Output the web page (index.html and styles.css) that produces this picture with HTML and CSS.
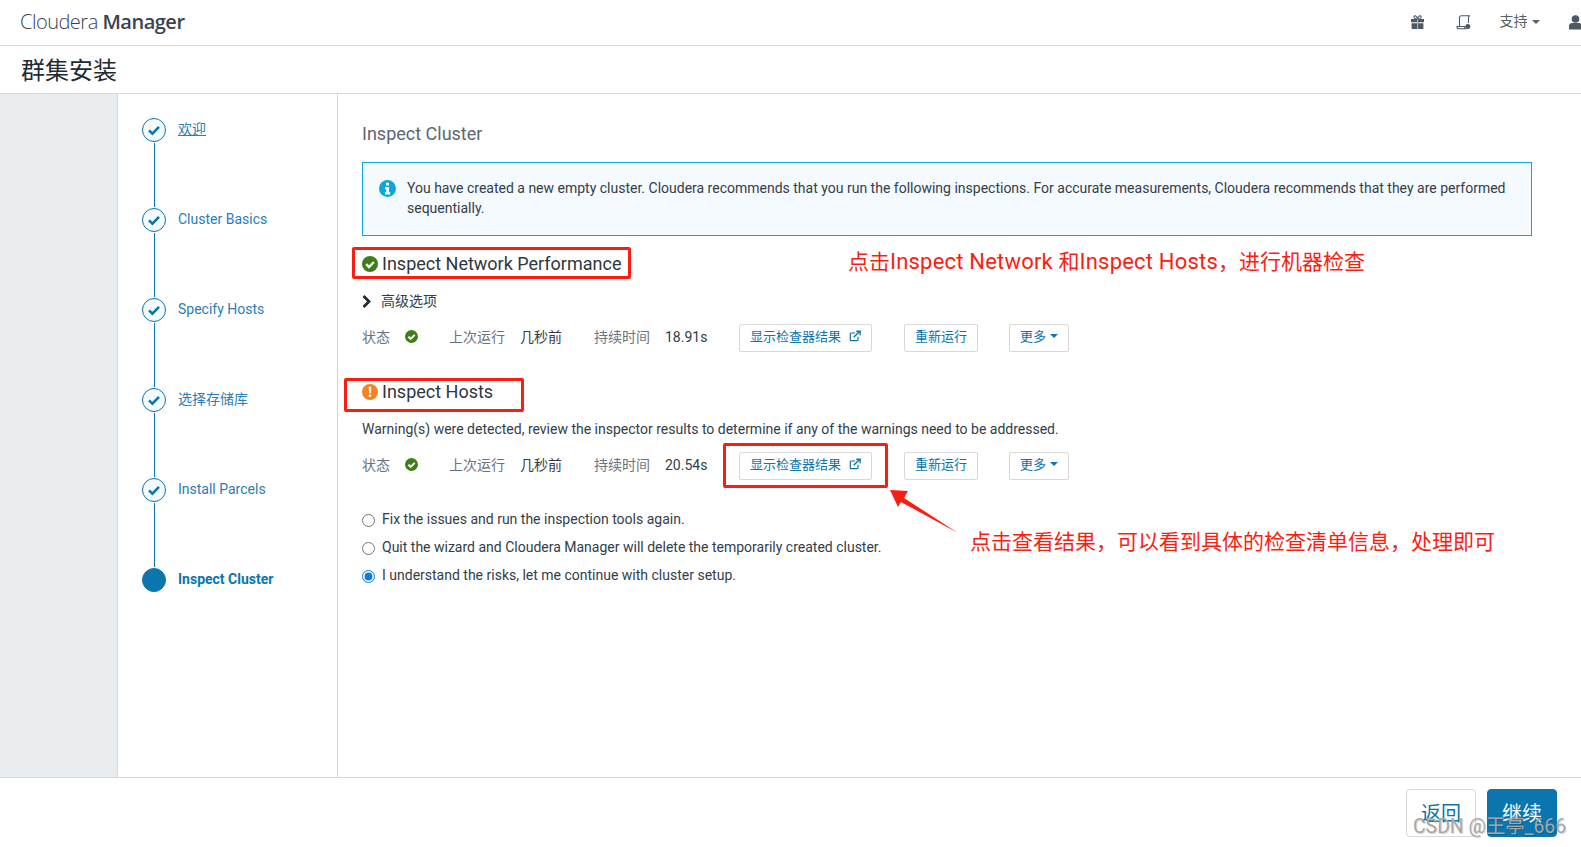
FILE: index.html
```html
<!DOCTYPE html>
<html lang="en">
<head>
    <meta charset="UTF-8">
    <title>群集安装 - Cloudera Manager</title>
    <link rel="stylesheet" href="styles.css">
</head>
<body>
    <svg class="icon-defs" width="0" height="0">
        <symbol id="i-ok" viewBox="0 0 16 16">
            <circle cx="8" cy="8" r="8" fill="#3f7d1c"/>
            <path d="M4.200 8.200 7 11l4.900-5" fill="none" stroke="#fff" stroke-width="2.400"/>
        </symbol>
        <symbol id="i-check" viewBox="0 0 14 14">
            <path d="M2 7.400 5.400 10.600 12 3.800" fill="none" stroke="#0b75ad" stroke-width="2.600"/>
        </symbol>
        <symbol id="i-link" viewBox="0 0 14 14">
            <path d="M10.500 8v3.500a1 1 0 0 1-1 1h-7a1 1 0 0 1-1-1v-7a1 1 0 0 1 1-1H7" fill="none" stroke="#0b75ad" stroke-width="1.400"/>
            <path d="M5.500 8.500 12 2M8.500 1.500h4.500v4.500" fill="none" stroke="#0b75ad" stroke-width="1.600"/>
        </symbol>
    </svg>

    <!-- Top bar -->
    <div class="topbar">
        <div class="logo">Cloudera <strong>Manager</strong></div>
        <div class="top-links">
            <svg class="top-icon top-gift" width="15" height="15" viewBox="0 0 15 15">
                <path d="M1 4h13v3.200H1zM1.600 8.200h11.800V14H1.600z" fill="#4d5964"/>
                <path d="M7.500 4C5.500 4 3.500 3.200 4 1.500 4.600 0 6.800.8 7.500 4c.7-3.200 2.900-4 3.500-2.500C11.500 3.200 9.500 4 7.500 4z" fill="none" stroke="#4d5964" stroke-width="1.100"/>
                <path d="M7 4h1.100v10H7z" fill="#c9a77f"/>
            </svg>
            <svg class="top-icon top-doc" width="16" height="15" viewBox="0 0 16 15">
                <path d="M3.500 11V2.500C3.500 1.400 4.400.8 5.500.8h8.500c-1 0-1.500.7-1.500 1.700V8M1 11.500h7.500c0 1 .3 1.800 1 2.300H2.500C1.500 13.800 1 12.800 1 11.500z" fill="none" stroke="#4d5964" stroke-width="1.100"/>
                <circle cx="11.800" cy="11.500" r="2.500" fill="#4d5964"/>
            </svg>
            <span class="top-menu">支持 <i class="caret"></i></span>
            <svg class="top-icon" width="13" height="15" viewBox="0 0 13 15">
                <circle cx="6.500" cy="4" r="3.800" fill="#4d5964"/>
                <path d="M0 14.500V11c0-2 1.500-3 3-3h7c1.500 0 3 1 3 3v3.500z" fill="#4d5964"/>
            </svg>
        </div>
    </div>

    <div class="titlebar">群集安装</div>

    <div class="content">
        <div class="gutter"></div>

        <!-- Wizard steps -->
        <div class="steps">
            <div class="step">
                <div class="step-track"><span class="step-dot"><svg width="14" height="14"><use href="#i-check"/></svg></span><span class="step-line"></span></div>
                <a class="step-name step-hover">欢迎</a>
            </div>
            <div class="step">
                <div class="step-track"><span class="step-dot"><svg width="14" height="14"><use href="#i-check"/></svg></span><span class="step-line"></span></div>
                <a class="step-name">Cluster Basics</a>
            </div>
            <div class="step">
                <div class="step-track"><span class="step-dot"><svg width="14" height="14"><use href="#i-check"/></svg></span><span class="step-line"></span></div>
                <a class="step-name">Specify Hosts</a>
            </div>
            <div class="step">
                <div class="step-track"><span class="step-dot"><svg width="14" height="14"><use href="#i-check"/></svg></span><span class="step-line"></span></div>
                <a class="step-name">选择存储库</a>
            </div>
            <div class="step">
                <div class="step-track"><span class="step-dot"><svg width="14" height="14"><use href="#i-check"/></svg></span><span class="step-line"></span></div>
                <a class="step-name">Install Parcels</a>
            </div>
            <div class="step">
                <div class="step-track"><span class="step-dot step-current"></span></div>
                <a class="step-name step-active">Inspect Cluster</a>
            </div>
        </div>

        <!-- Main panel -->
        <div class="main">
            <h2 class="page-heading">Inspect Cluster</h2>

            <div class="alert">
                <svg class="alert-icon" width="17" height="17" viewBox="0 0 17 17">
                    <circle cx="8.500" cy="8.500" r="8.500" fill="#0ea5e0"/>
                    <path d="M7 2.800h3v2.600H7zM6 7h4v5.300h1.200V14.500H6v-2.200h1.200V9.200H6z" fill="#fff"/>
                </svg>
                <p>You have created a new empty cluster. Cloudera recommends that you run the following inspections. For accurate measurements, Cloudera recommends that they are performed sequentially.</p>
            </div>

            <h3 class="section-title section-network">
                <svg width="16" height="16"><use href="#i-ok"/></svg>
                Inspect Network Performance
            </h3>
            <div class="advanced">
                <svg width="9" height="13" viewBox="0 0 9 13"><path d="M1.500 1 7 6.500 1.500 12" fill="none" stroke="#222b33" stroke-width="2.800"/></svg>
                高级选项
            </div>
            <div class="status-row">
                <span class="label">状态</span>
                <svg class="status-icon" width="13" height="13"><use href="#i-ok"/></svg>
                <span class="label">上次运行</span>
                <span class="value">几秒前</span>
                <span class="label">持续时间</span>
                <span class="duration">18.91s</span>
                <div><a class="btn">显示检查器结果 <svg class="btn-link" width="12" height="12"><use href="#i-link"/></svg></a></div>
                <div><a class="btn">重新运行</a></div>
                <div><a class="btn">更多 <i class="caret caret-blue"></i></a></div>
            </div>

            <h3 class="section-title section-hosts">
                <svg width="16" height="16" viewBox="0 0 16 16">
                    <circle cx="8" cy="8" r="8" fill="#f5841f"/>
                    <path d="M6.700 2.800h2.600l-.4 6.400H7.100zM6.800 10.400h2.400v2.500H6.800z" fill="#fff"/>
                </svg>
                Inspect Hosts
            </h3>
            <p class="warning">Warning(s) were detected, review the inspector results to determine if any of the warnings need to be addressed.</p>
            <div class="status-row">
                <span class="label">状态</span>
                <svg class="status-icon" width="13" height="13"><use href="#i-ok"/></svg>
                <span class="label">上次运行</span>
                <span class="value">几秒前</span>
                <span class="label">持续时间</span>
                <span class="duration">20.54s</span>
                <div><a class="btn">显示检查器结果 <svg class="btn-link" width="12" height="12"><use href="#i-link"/></svg></a></div>
                <div><a class="btn">重新运行</a></div>
                <div><a class="btn">更多 <i class="caret caret-blue"></i></a></div>
            </div>

            <div class="choices">
                <label class="choice"><input type="radio" name="next"> Fix the issues and run the inspection tools again.</label>
                <label class="choice"><input type="radio" name="next"> Quit the wizard and Cloudera Manager will delete the temporarily created cluster.</label>
                <label class="choice"><input type="radio" name="next" checked> I understand the risks, let me continue with cluster setup.</label>
            </div>
        </div>
    </div>

    <!-- Footer -->
    <div class="footer">
        <a class="footer-btn">返回</a>
        <a class="footer-btn footer-primary">继续</a>
    </div>

    <!-- Annotations drawn over the screenshot -->
    <div class="mark mark-network"></div>
    <div class="mark mark-hosts"></div>
    <div class="mark mark-result"></div>
    <svg class="mark-arrow" width="72" height="48" viewBox="0 0 72 48">
        <path d="M1 1 19 2 15 9 69 44 12 13 9 18z" fill="#fa1e12"/>
    </svg>
    <div class="note note-top">点击<span class="note-latin">Inspect Network </span>和<span class="note-latin">Inspect Hosts</span>，进行机器检查</div>
    <div class="note note-bottom">点击查看结果，可以看到具体的检查清单信息，处理即可</div>
    <div class="watermark">CSDN @王亭_666</div>
</body>
</html>
```

FILE: styles.css
```css
* {
    margin: 0;
    padding: 0;
    box-sizing: border-box;
}

body {
    font-family: Roboto, "Noto Sans CJK SC", sans-serif;
    font-size: 14px;
    color: #333d47;
    background-color: #fff;
    display: flex;
    flex-direction: column;
    height: 100vh;
    overflow: hidden;
    position: relative;
}

.icon-defs {
    position: absolute;
}

/* Top bar */
.topbar {
    height: 46px;
    flex: none;
    display: flex;
    justify-content: space-between;
    align-items: center;
    padding-left: 20px;
    border-bottom: 1px solid #d8d8d8;
    overflow: hidden;
}

.logo {
    font-family: "Open Sans", sans-serif;
    font-size: 20px;
    font-weight: 300;
    letter-spacing: -0.5px;
    color: #39444e;
    margin-bottom: 3px;
}

.logo strong {
    font-weight: 600;
}

.top-links {
    display: flex;
    align-items: center;
    margin-right: -30px;
}

.top-icon {
    margin-right: 29px;
}

.top-gift {
    margin-right: 31px;
}

.top-doc {
    margin-right: 28px;
}

.top-menu {
    font-size: 14px;
    color: #55606a;
    margin-right: 29px;
    margin-bottom: 6px;
}

.caret {
    display: inline-block;
    border-left: 4px solid transparent;
    border-right: 4px solid transparent;
    border-top: 4px solid #55606a;
    vertical-align: middle;
    margin-left: 1px;
}

.caret-blue {
    border-top-color: #0b75ad;
    margin-left: 0;
}

.titlebar {
    height: 48px;
    flex: none;
    padding-left: 21px;
    font-size: 24px;
    line-height: 50px;
    color: #222b33;
    border-bottom: 1px solid #d8d8d8;
}

/* Three columns */
.content {
    flex: 1;
    display: flex;
    min-height: 0;
}

.gutter {
    width: 118px;
    flex: none;
    background-color: #eaedf0;
    border-right: 1px solid #d8d8d8;
}

.steps {
    width: 220px;
    flex: none;
    padding: 24px 0 0 24px;
    border-right: 1px solid #d8d8d8;
}

.step {
    height: 90px;
    display: flex;
}

.step-track {
    width: 24px;
    display: flex;
    flex-direction: column;
    align-items: center;
    margin-right: 12px;
}

.step-dot {
    width: 24px;
    height: 24px;
    flex: none;
    display: flex;
    justify-content: center;
    align-items: center;
    border: 1px solid #0b75ad;
    border-radius: 50%;
    background-color: #f5faff;
}

.step-current {
    background-color: #0b75ad;
}

.step-line {
    flex: 1;
    width: 1px;
    margin: 1px 0;
    background-color: #0b75ad;
}

.step-name {
    line-height: 20px;
    padding-top: 1px;
    height: 21px;
    font-size: 14px;
    color: #2b7db4;
}

.step-hover {
    text-decoration: underline;
}

.step-active {
    font-weight: 700;
    color: #0b75ad;
}

/* Main panel */
.main {
    flex: 1;
    padding: 0 49px 0 24px;
}

.page-heading {
    font-size: 18px;
    font-weight: 400;
    line-height: 24px;
    color: #5c6670;
    margin: 28px 0 16px;
}

.alert {
    display: flex;
    align-items: flex-start;
    height: 74px;
    padding: 15px 24px 0 16px;
    background-color: #f5faff;
    border: 1px solid #0ea5e0;
}

.alert-icon {
    flex: none;
    margin: 2px 11px 0 0;
}

.alert p {
    line-height: 20px;
}

.section-title {
    display: flex;
    align-items: center;
    gap: 4px;
    font-size: 18px;
    font-weight: 400;
    line-height: 24px;
    color: #2d3740;
}

.section-network {
    margin-top: 16px;
}

.section-hosts {
    margin-top: 28px;
}

.advanced {
    display: flex;
    align-items: center;
    gap: 10px;
    line-height: 20px;
    margin: 15px 0 13px;
    color: #333d47;
}

.status-row {
    display: grid;
    grid-template-columns: 43px 44px 71px 74px 71px 74px 165px 105px auto;
    align-items: center;
    height: 28px;
}

.label {
    color: #6b747d;
    margin-bottom: 4px;
}

.status-icon,
.value {
    margin-bottom: 4px;
}

.duration {
    margin-bottom: 2px;
}

.btn {
    display: inline-flex;
    align-items: center;
    gap: 4px;
    height: 28px;
    padding: 0 10px 5px;
    font-size: 13px;
    color: #0b75ad;
    background-color: #fff;
    border: 1px solid #d8d8d8;
    border-radius: 2px;
}

.btn-link {
    margin-left: 4px;
}

.warning {
    line-height: 20px;
    margin: 15px 0 13px;
}

.choices {
    margin-top: 25px;
}

.choice {
    display: flex;
    align-items: center;
    gap: 7px;
    height: 28px;
}

.choice input {
    width: 13px;
    height: 13px;
    margin: 2px 0 0;
    accent-color: #0a7cf0;
}

/* Footer */
.footer {
    height: 70px;
    flex: none;
    display: flex;
    justify-content: flex-end;
    gap: 11px;
    padding: 11px 24px 0 0;
    border-top: 1px solid #d8d8d8;
}

.footer-btn {
    width: 70px;
    height: 48px;
    font-size: 20px;
    line-height: 48px;
    text-align: center;
    color: #0b75ad;
    border: 1px solid #d8d8d8;
    border-radius: 4px;
}

.footer-primary {
    color: #fff;
    background-color: #0b75ad;
    border-color: #0b75ad;
}

/* Annotations */
.mark {
    position: absolute;
    border: 3px solid #fa1e12;
    border-radius: 2px;
}

.mark-network {
    left: 352px;
    top: 247px;
    width: 279px;
    height: 32px;
}

.mark-hosts {
    left: 344px;
    top: 378px;
    width: 180px;
    height: 34px;
}

.mark-result {
    left: 723px;
    top: 443px;
    width: 165px;
    height: 45px;
}

.mark-arrow {
    position: absolute;
    left: 889px;
    top: 489px;
}

.note {
    position: absolute;
    font-size: 21px;
    line-height: 30px;
    color: #fa1e12;
}

.note-latin {
    font-size: 22px;
    letter-spacing: 0.2px;
}

.note-top {
    left: 848px;
    top: 247px;
}

.note-bottom {
    left: 970px;
    top: 527px;
}

.watermark {
    position: absolute;
    left: 1413px;
    top: 814px;
    font-size: 19.4px;
    line-height: 26px;
    color: #a8a8a8;
    text-shadow: 1px 1px 1px rgba(0, 0, 0, 0.18);
}
```
